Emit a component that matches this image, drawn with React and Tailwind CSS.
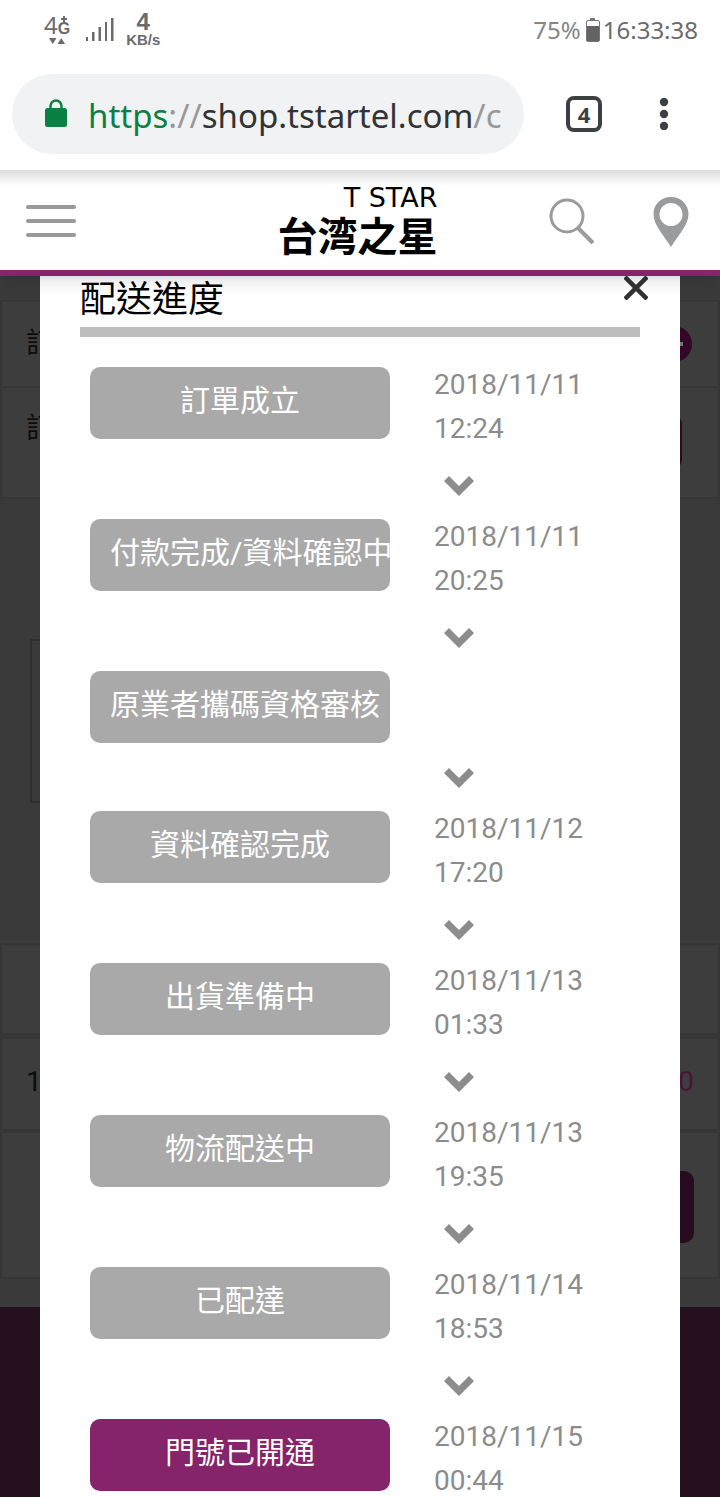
import React from "react";

const STEPS = [
  { label: "訂單成立", date: "2018/11/11", time: "12:24" },
  { label: "付款完成/資料確認中", date: "2018/11/11", time: "20:25" },
  { label: "原業者攜碼資格審核" },
  { label: "資料確認完成", date: "2018/11/12", time: "17:20" },
  { label: "出貨準備中", date: "2018/11/13", time: "01:33" },
  { label: "物流配送中", date: "2018/11/13", time: "19:35" },
  { label: "已配達", date: "2018/11/14", time: "18:53" },
  { label: "門號已開通", date: "2018/11/15", time: "00:44", active: true },
];

const StatusBar = () => (
  <div className="flex h-15 shrink-0 items-center justify-between pl-11 pr-5.5 font-['Noto_Sans',sans-serif] text-[#6b6b6b]">
    <div className="flex items-center">
      <div className="flex flex-col items-center">
        <div className="flex h-5 items-center">
          <span className="text-2xl leading-5">4</span>
          <span className="flex flex-col items-center font-['Liberation_Sans',sans-serif] font-bold">
            <svg className="size-2" viewBox="0 0 8 8" stroke="currentColor" strokeWidth="2">
              <path d="M4 1v6M1 4h6" />
            </svg>
            <span className="text-base leading-3">G</span>
          </span>
        </div>
        <svg className="mt-0.5 h-2 w-4" viewBox="0 0 16 8" fill="currentColor">
          <path d="M0 1h7.500L3.750 7zM8.500 7H16l-3.750-6z" />
        </svg>
      </div>
      <svg className="ml-4 h-6 w-7" viewBox="0 0 28 24" fill="currentColor">
        <path d="M0 19h2v4H0zM6 14h2.500v9H6zM12.500 9H15v14h-2.500zM19 4h2v19h-2zM25 0h2.500v23H25z" />
      </svg>
      <div className="ml-3 flex flex-col items-center font-['Liberation_Sans',sans-serif] font-bold">
        <span className="text-2xl leading-5">4</span>
        <span className="text-[15px] leading-4">KB/s</span>
      </div>
    </div>
    <div className="flex items-center">
      <span className="text-2xl text-[#858585]">75%</span>
      <svg className="ml-1 mr-0.5 h-6 w-4" viewBox="0 0 16 24">
        <path d="M5 0h5v2H5z" fill="#777" />
        <rect x="1.500" y="2.500" width="13" height="21" rx="1.500" fill="#fff" stroke="#777" />
        <path d="M2 8h12v15H2z" fill="#636363" />
      </svg>
      <span className="text-2xl">16:33:38</span>
    </div>
  </div>
);

const BrowserBar = () => (
  <div className="flex h-[110px] shrink-0 items-start pl-3 pr-[51px] pt-3.5 text-[#3c4043]">
    <div className="flex h-20 min-w-0 flex-1 items-center rounded-full bg-[#f0f2f4] pl-8 pr-5">
      <svg className="h-8 w-6 shrink-0" viewBox="0 0 24 32" fill="#0b8043">
        <rect x="1" y="10" width="22" height="19" rx="2.500" />
        <path d="M6.500 12V8a5.500 5.500 0 0 1 11 0v4" fill="none" stroke="#0b8043" strokeWidth="2.500" />
      </svg>
      <div className="ml-5 overflow-hidden whitespace-nowrap pt-1 font-['Noto_Sans',sans-serif] text-[33px] leading-12 text-[#333]">
        <span className="text-[#0b8043]">https</span>
        <span className="text-[#999]">://</span>
        shop.tstartel.com
        <span className="text-[#999]">/c</span>
      </div>
    </div>
    <button
      aria-label="Tabs"
      className="ml-[42px] mt-[22px] flex size-9 items-center justify-center rounded-lg border-4 border-[#3c4043] font-['Noto_Sans',sans-serif] text-[22px] font-bold leading-5"
    >
      4
    </button>
    <button aria-label="More" className="ml-[57px] mt-6">
      <svg className="h-8 w-2.5" viewBox="0 0 10 32" fill="currentColor">
        <circle cx="5" cy="4" r="4.200" />
        <circle cx="5" cy="16" r="4.200" />
        <circle cx="5" cy="28" r="4.200" />
      </svg>
    </button>
  </div>
);

const SiteHeader = () => (
  <header className="relative z-10 shrink-0 border-b-6 border-[#85246b] bg-white shadow-lg">
    <div className="h-4 bg-linear-to-b from-[#dcdcdc] to-white" />
    <div className="grid h-21 grid-cols-3 items-center pb-4 pl-6.5 pr-[31px]">
      <button aria-label="Menu" className="justify-self-start">
        <svg className="h-9 w-[50px]" viewBox="0 0 50 36" stroke="#999" strokeWidth="4" strokeLinecap="round">
          <path d="M2 3h46M2 17h46M2 31h46" />
        </svg>
      </button>
      <a
        href="#"
        className="flex flex-col items-end justify-self-center whitespace-nowrap text-black"
      >
        <span className="font-['DejaVu_Sans',sans-serif] text-[27px] leading-6">T STAR</span>
        <span className="font-['Noto_Sans_CJK_JP',sans-serif] text-[40px] font-bold leading-12">台湾之星</span>
      </a>
      <div className="flex items-center gap-14 justify-self-end">
        <button aria-label="Search">
          <svg className="h-12 w-12" viewBox="0 0 48 48" fill="none" stroke="#999b9c" strokeWidth="3">
            <circle cx="18" cy="18" r="16" />
            <path d="M29 30l15 15" strokeWidth="4" />
          </svg>
        </button>
        <button aria-label="Stores">
          <svg className="h-[50px] w-9" viewBox="0 0 36 50" fill="#999b9c">
            <path
              fillRule="evenodd"
              d="M18 0C8 0 .5 7.500.5 17 .5 28 10 37 18 50 26 37 35.500 28 35.500 17 35.500 7.500 28 0 18 0zM18 6a11.500 11.500 0 1 1 0 23 11.500 11.500 0 0 1 0-23z"
            />
          </svg>
        </button>
      </div>
    </div>
  </header>
);

// Dimmed order page that sits behind the dialog
const OrderPage = () => (
  <div
    aria-hidden="true"
    className="col-start-1 row-start-1 flex flex-col bg-[#3a3a3a] font-['Roboto','Noto_Sans_CJK_TC',sans-serif] text-[28px] text-[#0c0c0c]"
  >
    <div className="mt-6 flex h-22 items-center justify-between border-2 border-[#363636] bg-[#3d3d3d] pl-6 pr-6.5">
      <span>訂</span>
      <svg className="size-9" viewBox="0 0 36 36">
        <circle cx="18" cy="18" r="18" fill="#320727" />
        <path d="M9 18h18" stroke="#777" strokeWidth="4" />
      </svg>
    </div>
    <div className="flex h-[111px] items-start justify-between border-2 border-t-0 border-[#363636] bg-[#3d3d3d] pl-6 pr-9 pt-5">
      <span>訂</span>
      <span className="mt-2 h-13 w-10 rounded-lg bg-[#2a0a20]" />
    </div>
    <div className="ml-7.5 mt-35 h-41 w-1/2 border-2 border-[#2f2f2f]" />
    <div className="mt-35 h-[92px] border-2 border-[#363636] bg-[#3d3d3d]" />
    <div className="flex h-24 items-center justify-between border-2 border-t-4 border-[#363636] bg-[#3d3d3d] px-6 pb-1">
      <span>1</span>
      <span className="text-[#4c1339]">0</span>
    </div>
    <div className="flex h-37 items-start justify-end border-2 border-[#363636] bg-[#3d3d3d] px-6 pt-9.5">
      <span className="h-18 w-40 rounded-[10px] bg-[#270b1f]" />
    </div>
    <div className="mt-7 flex-1 bg-[#24101f]" />
  </div>
);

const Step = ({ step, last }) => (
  <li className="pl-2.5">
    <div className="flex min-h-19 gap-11">
      <div
        className={`mt-1 h-18 w-[300px] shrink-0 whitespace-nowrap rounded-[10px] px-5 text-center text-[30px] leading-17 text-white ${
          step.active ? "bg-[#85246b]" : "bg-[#a9a9a9]"
        }`}
      >
        {step.label}
      </div>
      {step.date && (
        <div className="flex flex-col text-[28px] leading-11 text-[#8c8c8c]">
          <span>{step.date}</span>
          <span>{step.time}</span>
        </div>
      )}
    </div>
    {!last && (
      <div className="flex h-16 items-center pl-[354px] pt-1.5">
        <svg className="h-5 w-[30px]" viewBox="0 0 30 20" fill="#8c8c8c">
          <path d="M0 5L5 0l10 10L25 0l5 5-15 15z" />
        </svg>
      </div>
    )}
  </li>
);

const ProgressDialog = () => (
  <section
    role="dialog"
    aria-labelledby="progress-title"
    className="z-1 col-start-1 row-start-1 mx-10 bg-white px-10 font-['Roboto','Noto_Sans_CJK_TC',sans-serif]"
  >
    <div className="-mr-2 flex items-start justify-between">
      <h2 id="progress-title" className="h-[51px] text-[36px] leading-12 text-black">
        配送進度
      </h2>
      <button aria-label="Close">
        <svg className="size-6" viewBox="0 0 24 24" stroke="#333" strokeWidth="4.500">
          <path d="M1 1l22 22M23 1L1 23" />
        </svg>
      </button>
    </div>
    <div className="h-2.5 bg-[#bdbdbd]" />
    <ol className="pt-[26px]">
      {STEPS.map((step, i) => (
        <Step key={step.label} step={step} last={i === STEPS.length - 1} />
      ))}
    </ol>
  </section>
);

const App = () => {
  return (
    <div className="flex h-screen flex-col overflow-hidden bg-white">
      <StatusBar />
      <BrowserBar />
      <SiteHeader />
      <main className="grid min-h-0 flex-1 overflow-hidden">
        <OrderPage />
        <ProgressDialog />
      </main>
    </div>
  );
};

export default App;
